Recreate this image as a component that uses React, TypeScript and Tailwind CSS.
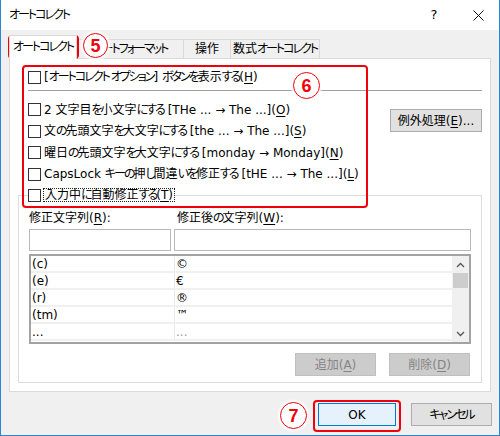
import React from "react";

const RED = "border-[#f0000a]";

// kana runs: Meiryo UI sets kana narrower than Noto, so tighten them
function K({ children }: { children: React.ReactNode }) {
  return <span className="tracking-[-2px]">{children}</span>;
}

function Key({ k }: { k: string }) {
  return (
    <>
      (<span className="underline underline-offset-[2px]">{k}</span>)
    </>
  );
}

function Box() {
  return <span className="w-[13px] h-[13px] border border-[#333333] bg-white shrink-0" />;
}

function CheckRow({ children, h = "h-[21.5px]" }: { children: React.ReactNode; h?: string }) {
  return (
    <div className={`${h} flex items-center gap-[3px] whitespace-nowrap`}>
      <Box />
      <span>{children}</span>
    </div>
  );
}

function Num({ n }: { n: string }) {
  return (
    <div
      className={`w-full h-full rounded-full bg-white border-[1.5px] ${RED} flex items-center justify-center text-[#f0000a] text-[18px] font-bold leading-none [font-family:'Liberation_Sans',sans-serif] shadow-[0_0_2px_2px_rgba(255,255,255,0.9)]`}
    >
      {n}
    </div>
  );
}

function Chevron({ up }: { up?: boolean }) {
  return (
    <svg width="9" height="6" viewBox="0 0 9 6">
      <path
        d={up ? "M1 5 L4.5 1.5 L8 5" : "M1 1 L4.5 4.5 L8 1"}
        fill="none"
        stroke="#555"
        strokeWidth="1.3"
      />
    </svg>
  );
}

const rows = [
  ["(c)", "©", false],
  ["(e)", "€", false],
  ["(r)", "®", false],
  ["(tm)", "™", false],
  ["...", "...", true],
] as const;

export default function App() {
  return (
    <div className="relative w-[500px] h-[436px] bg-[#f0f0f0] border-l border-r border-b border-[#2b87d4] flex flex-col text-[12px] text-black [font-family:'DejaVu_Sans','Noto_Sans_CJK_JP',sans-serif] [font-feature-settings:'palt'_1] overflow-hidden">
      {/* title bar */}
      <div className="h-[30px] bg-white flex items-center shrink-0">
        <span className="pl-[8px] flex-1">
          <K>オートコレクト</K>
        </span>
        <span className="w-[46px] text-center text-[13px]">?</span>
        <span className="w-[42px] flex justify-center">
          <svg width="11" height="11" viewBox="0 0 11 11">
            <path d="M0.5 0.5 L10.5 10.5 M10.5 0.5 L0.5 10.5" stroke="#111" strokeWidth="1" />
          </svg>
        </span>
      </div>

      {/* tabs */}
      <div className="h-[28px] flex items-end pl-[8px] shrink-0 whitespace-nowrap">
        <div className="relative z-10 -mb-px w-[68px] shrink-0 h-[24px] bg-white border-l border-t border-r border-[#d9d9d9] flex items-center justify-center pb-[2px]">
          <K>オートコレクト</K>
        </div>
        <div className="w-[107px] shrink-0 h-[19px] border-t border-r border-[#d9d9d9] flex items-center justify-center">
          <K>オートフォーマット</K>
        </div>
        <div className="w-[47px] shrink-0 h-[19px] border-t border-r border-[#d9d9d9] flex items-center justify-center">
          操作
        </div>
        <div className="w-[89px] shrink-0 h-[19px] border-t border-r border-[#d9d9d9] flex items-center justify-center">
          数式<K>オートコレクト</K>
        </div>
      </div>

      {/* panel */}
      <div className="ml-[8px] w-[482px] h-[334px] border border-[#d9d9d9] bg-white flex flex-col shrink-0">
        <div className="mt-[7px] pl-[18px]">
          <CheckRow h="h-[22px]">
            [<K>オートコレクト オプション</K>] <K>ボタンを</K>表示<K>する</K>
            <Key k="H" />
          </CheckRow>
        </div>
        <div className="mt-[2px] ml-[18px] mr-[8px] h-px bg-[#a0a0a0]" />

        <div className="mt-[8px] flex">
          <div className="pl-[18px] flex flex-col">
            <CheckRow>
              2 文字目<K>を</K>小文字<K>にする</K> [THe ... → The ...]<Key k="O" />
            </CheckRow>
            <CheckRow>
              文<K>の</K>先頭文字<K>を</K>大文字<K>にする</K> [the ... → The ...]<Key k="S" />
            </CheckRow>
            <CheckRow>
              曜日<K>の</K>先頭文字<K>を</K>大文字<K>にする</K> [monday → Monday]<Key k="N" />
            </CheckRow>
            <CheckRow>
              CapsLock <K>キーの</K>押<K>し</K>間違<K>いを</K>修正<K>する</K> [tHE ... → The ...]
              <Key k="L" />
            </CheckRow>
          </div>
          <button className="ml-auto mr-[8px] mt-[10px] w-[92px] h-[23px] bg-[#e1e1e1] border border-[#adadad] flex items-center justify-center whitespace-nowrap">
            例外処理<Key k="E" />...
          </button>
        </div>

        <fieldset className="mt-[3px] mx-[8px] border border-[#dcdcdc] pb-[6px]">
          <legend className="ml-[9px]">
            <div className="h-[14px] flex items-center gap-[2px]">
              <Box />
              <span className="h-[14px] px-[1px] border border-dotted border-[#222] flex items-center whitespace-nowrap">
                入力中<K>に</K>自動修正<K>する</K>
                <Key k="T" />
              </span>
            </div>
          </legend>

          <div className="px-[10px]">
            <div className="mt-[8px] h-[16px] flex items-center">
              <span className="w-[148px]">
                修正文字列<Key k="R" />:
              </span>
              <span>
                修正後<K>の</K>文字列<Key k="W" />:
              </span>
            </div>
            <div className="mt-[3px] flex gap-[3px]">
              <div className="w-[142px] h-[22px] border border-[#b9b9b9] bg-white" />
              <div className="w-[297px] h-[22px] border border-[#b9b9b9] bg-white" />
            </div>

            <div className="mt-[3px] w-[442px] h-[90px] border-2 border-[#a3a3a3] flex bg-white">
              <div className="flex-1 flex flex-col">
                {rows.map(([a, b, dim]) => (
                  <div key={a} className="h-[17px] flex border-b-2 border-[#f0f0f0] leading-none">
                    <div className="w-[144px] pl-[1px] border-r border-[#e8e8e8] flex items-center">{a}</div>
                    <div className={`flex-1 pl-[1px] flex items-center ${dim ? "text-[#9a9a9a]" : ""}`}>{b}</div>
                  </div>
                ))}
              </div>
              <div className="w-[17px] bg-[#f0f0f0] flex flex-col">
                <div className="h-[17px] flex items-center justify-center">
                  <Chevron up />
                </div>
                <div className="mx-[1px] h-[15px] bg-[#cdcdcd]" />
                <div className="flex-1" />
                <div className="h-[17px] flex items-center justify-center">
                  <Chevron />
                </div>
              </div>
            </div>

            <div className="mt-[9px] w-[442px] flex justify-end gap-[13px] pr-[1px] text-[#848484]">
              <div className="w-[81px] h-[23px] bg-[#cccccc] border border-[#bfbfbf] flex items-center justify-center">
                追加<Key k="A" />
              </div>
              <div className="w-[81px] h-[23px] bg-[#cccccc] border border-[#bfbfbf] flex items-center justify-center">
                削除<Key k="D" />
              </div>
            </div>
          </div>
        </fieldset>
      </div>

      {/* bottom buttons */}
      <div className="pt-[11px] pr-[7px] flex justify-end gap-[15px]">
        <button className="w-[78px] h-[23px] bg-[#e5f1fb] border border-[#0078d7] flex items-center justify-center">
          OK
        </button>
        <button className="w-[81px] h-[23px] bg-[#e1e1e1] border border-[#adadad] flex items-center justify-center">
          <K>キャンセル</K>
        </button>
      </div>

      {/* annotations */}
      <div className={`absolute left-[7px] top-[35px] w-[71px] h-[24px] border-[2.5px] ${RED} rounded-[4px]`} />
      <div className="absolute left-[82px] top-[33px] w-[25px] h-[25px]">
        <Num n="5" />
      </div>
      <div className={`absolute left-[21px] top-[65px] w-[346px] h-[143px] border-[2.5px] ${RED} rounded-[4px]`} />
      <div className="absolute left-[292px] top-[72px] w-[27px] h-[27px]">
        <Num n="6" />
      </div>
      <div className={`absolute left-[312px] top-[400px] w-[88px] h-[32px] border-[2.5px] ${RED} rounded-[4px]`} />
      <div className="absolute left-[279px] top-[402px] w-[27px] h-[27px]">
        <Num n="7" />
      </div>
    </div>
  );
}
